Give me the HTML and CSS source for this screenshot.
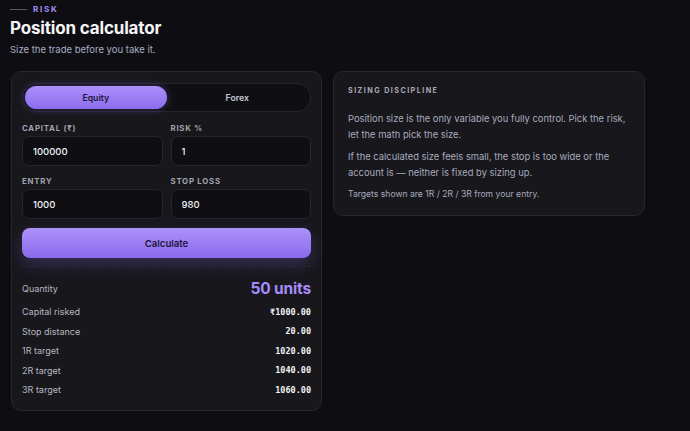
FILE: index.html
```html
<!DOCTYPE html>
<html>
<head>
    <meta charset="UTF-8">
    <meta name="viewport" content="width=device-width, initial-scale=1.0">
    <title>Position calculator</title>
    <link rel="stylesheet" href="styles.css">
</head>
<body>
    <div class="page">
        <div class="eyebrow"><span class="eyebrow-line"></span>RISK</div>
        <h1 class="title">Position calculator</h1>
        <p class="subtitle">Size the trade before you take it.</p>

        <div class="layout">
            <div class="card calc">
                <div class="tabs">
                    <div class="tab active">Equity</div>
                    <div class="tab">Forex</div>
                </div>

                <div class="fields">
                    <div class="field">
                        <label>CAPITAL (₹)</label>
                        <input type="text" value="100000">
                    </div>
                    <div class="field">
                        <label>RISK %</label>
                        <input type="text" value="1">
                    </div>
                    <div class="field">
                        <label>ENTRY</label>
                        <input type="text" value="1000">
                    </div>
                    <div class="field">
                        <label>STOP LOSS</label>
                        <input type="text" value="980">
                    </div>
                </div>

                <button class="calc-btn">Calculate</button>

                <div class="results">
                    <div class="row qty">
                        <span>Quantity</span>
                        <span class="qty-value">50 units</span>
                    </div>
                    <div class="row">
                        <span>Capital risked</span>
                        <span class="num">₹1000.00</span>
                    </div>
                    <div class="row">
                        <span>Stop distance</span>
                        <span class="num">20.00</span>
                    </div>
                    <div class="row">
                        <span>1R target</span>
                        <span class="num">1020.00</span>
                    </div>
                    <div class="row">
                        <span>2R target</span>
                        <span class="num">1040.00</span>
                    </div>
                    <div class="row">
                        <span>3R target</span>
                        <span class="num">1060.00</span>
                    </div>
                </div>
            </div>

            <div class="card notes">
                <div class="notes-title">SIZING DISCIPLINE</div>
                <p>Position size is the only variable you fully control. Pick the risk, let the math pick the size.</p>
                <p>If the calculated size feels small, the stop is too wide or the account is — neither is fixed by sizing up.</p>
                <p class="small">Targets shown are 1R / 2R / 3R from your entry.</p>
            </div>
        </div>
    </div>
</body>
</html>
```
FILE: styles.css
```css
body {
    margin: 0;
    background: #0e0e12;
    color: #f4f4f6;
    font-family: Inter, "Noto Sans", sans-serif;
}
.page {
    padding: 3px 10px 20px 10px;
}
.eyebrow {
    display: flex;
    align-items: center;
    gap: 6px;
    font-size: 8px;
    font-weight: 700;
    letter-spacing: 0.22em;
    color: #a78bfa;
    line-height: 12px;
}
.eyebrow-line {
    width: 17px;
    height: 1px;
    background: #5a5a66;
}
.title {
    margin: 2px 0 0 0;
    font-size: 17px;
    font-weight: 700;
    line-height: 22px;
    letter-spacing: -0.01em;
}
.subtitle {
    margin: 4px 0 0 0;
    font-size: 9.5px;
    line-height: 13px;
    color: #a9acc4;
}
.layout {
    display: grid;
    grid-template-columns: 311px 312px;
    gap: 11px;
    align-items: start;
    margin: 15px 0 0 1px;
}
.card {
    background: #17171c;
    border: 1px solid #26262d;
    border-radius: 10px;
}
.calc {
    padding: 11px 10px 10px 10px;
}

/* equity / forex toggle */
.tabs {
    display: flex;
    padding: 2px;
    background: #0f0f13;
    border: 1px solid #24242b;
    border-radius: 14px;
}
.tab {
    flex: 1;
    height: 23px;
    display: flex;
    align-items: center;
    justify-content: center;
    font-size: 8.7px;
    font-weight: 600;
    color: #c9c9d2;
    border-radius: 12px;
}
.tab.active {
    background: linear-gradient(180deg, #ac90fb, #8c6cee);
    color: #1d1838;
    box-shadow: 0 0 10px rgba(139, 108, 238, 0.35);
}

.fields {
    display: grid;
    grid-template-columns: 1fr 1fr;
    gap: 10px 8px;
    margin-top: 11px;
}
.field label {
    display: block;
    font-size: 7.8px;
    font-weight: 700;
    letter-spacing: 0.1em;
    color: #a3a3ae;
    line-height: 10px;
    margin-bottom: 3px;
}
.field input {
    box-sizing: border-box;
    width: 100%;
    height: 30px;
    padding: 0 10px;
    background: #0f0f13;
    border: 1px solid #25252c;
    border-radius: 7px;
    color: #f2f2f5;
    font-family: Inter, sans-serif;
    font-size: 9.5px;
    font-weight: 500;
    outline: none;
}

.calc-btn {
    display: block;
    width: 100%;
    height: 30px;
    margin-top: 9px;
    border: none;
    border-radius: 8px;
    background: linear-gradient(180deg, #ad91fb, #8a6aec);
    color: #1d1838;
    font-family: Inter, sans-serif;
    font-size: 9.6px;
    font-weight: 600;
    box-shadow: 0 6px 16px rgba(139, 108, 238, 0.28);
}

.results {
    margin-top: 8px;
    border-top: 1px dashed #2b2b36;
    padding-top: 10px;
}
.row {
    display: flex;
    justify-content: space-between;
    align-items: center;
    height: 19.5px;
    font-size: 9px;
    color: #b7b7c1;
}
.row.qty {
    height: 22px;
    margin-bottom: 3px;
}
.qty-value {
    font-size: 15.5px;
    font-weight: 700;
    color: #a78bfa;
    letter-spacing: -0.01em;
}
.num {
    font-family: "DejaVu Sans Mono", "Liberation Mono", monospace;
    font-size: 8.5px;
    font-weight: 700;
    color: #f2f2f5;
}

/* right side notes */
.notes {
    padding: 14px 14px 14px 14px;
}
.notes-title {
    font-size: 7.2px;
    font-weight: 700;
    letter-spacing: 0.2em;
    color: #a9a9b4;
    line-height: 10px;
    margin-bottom: 15px;
}
.notes p {
    margin: 0 0 6px 0;
    font-size: 9.4px;
    line-height: 16px;
    color: #a9abbd;
}
.notes p.small {
    font-size: 8.6px;
    line-height: 14px;
    margin: 0;
}
```
